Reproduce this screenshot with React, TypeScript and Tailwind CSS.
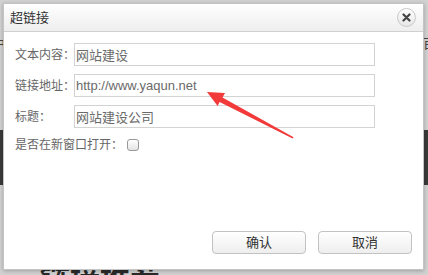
import React from 'react';

const font = { fontFamily: '"Liberation Sans", Arial, "Noto Sans CJK SC", sans-serif' };

function Field({ label, value }: { label: string; value: string }) {
  return (
    <div className="flex items-center">
      <span className="w-[59px] shrink-0 whitespace-nowrap text-[12px] text-[#666]">{label}</span>
      <input
        readOnly
        value={value}
        className="h-[23px] w-[301px] border border-[#d3d3d3] bg-white px-[1px] text-[13px] text-[#6a6a6a] outline-none"
      />
    </div>
  );
}

function Arrow() {
  return (
    <svg className="pointer-events-none absolute inset-0" width="428" height="275" viewBox="0 0 428 275">
      <polygon
        points="207,92 225,93 222.5,97.6 293.6,137.2 292.6,138.6 219.6,102 217.6,106"
        fill="#f23a3a"
      />
    </svg>
  );
}

export default function App() {
  return (
    <div className="relative h-[275px] w-[428px] overflow-hidden bg-[#d2d2d2]" style={font}>
      {/* page behind the dialog */}
      <div className="flex flex-col">
        <div className="flex h-[130px] justify-between pt-[34px] text-[13px] text-[#444]">
          <span className="-ml-[8px]">中</span>
          <span className="-mr-[8px]">百</span>
        </div>
        <div className="h-[55px] bg-[#3a3a3a]" />
        <div className="whitespace-nowrap pl-[40px] pt-[80px] text-[30px] font-bold leading-none text-[#2a2a2a]">链接推荐</div>
      </div>

      {/* dialog */}
      <div className="absolute left-[3px] top-[3px] flex h-[267px] w-[421px] flex-col border border-[#c4c4c4] bg-white shadow-[0_1px_4px_rgba(0,0,0,0.25)]">
        <div className="flex h-[28px] shrink-0 items-center justify-between border-b border-[#d0d0d0] bg-gradient-to-b from-white to-[#eeeeee] pl-[6px] pr-[7px]">
          <span className="text-[13px] text-[#333]">超链接</span>
          <span className="flex h-[19px] w-[19px] items-center justify-center rounded-full border border-[#c8c8c8] bg-gradient-to-b from-white to-[#e6e6e6]">
            <svg width="9" height="9" viewBox="0 0 9 9">
              <path d="M1.5 1.5 L7.5 7.5 M7.5 1.5 L1.5 7.5" stroke="#444" strokeWidth="2.2" strokeLinecap="round" />
            </svg>
          </span>
        </div>

        <div className="flex flex-col gap-[8px] pl-[11px] pt-[11px]">
          <Field label="文本内容：" value="网站建设" />
          <Field label="链接地址：" value="http://www.yaqun.net" />
          <Field label="标题：" value="网站建设公司" />
          <div className="flex items-center">
            <span className="whitespace-nowrap text-[12px] text-[#666]">是否在新窗口打开：</span>
            <span className="ml-[4px] h-[12px] w-[12px] rounded-[3px] border border-[#999] bg-gradient-to-b from-white to-[#e4e4e4]" />
          </div>
        </div>

        <div className="mt-auto flex justify-end gap-[12px] pb-[15px] pr-[11px]">
          <button className="h-[23px] w-[94px] rounded-[4px] border border-[#c2c2c2] bg-gradient-to-b from-white to-[#eeeeee] text-[13px] text-[#333]">
            确认
          </button>
          <button className="h-[23px] w-[94px] rounded-[4px] border border-[#c2c2c2] bg-gradient-to-b from-white to-[#eeeeee] text-[13px] text-[#333]">
            取消
          </button>
        </div>
      </div>

      <Arrow />
    </div>
  );
}
